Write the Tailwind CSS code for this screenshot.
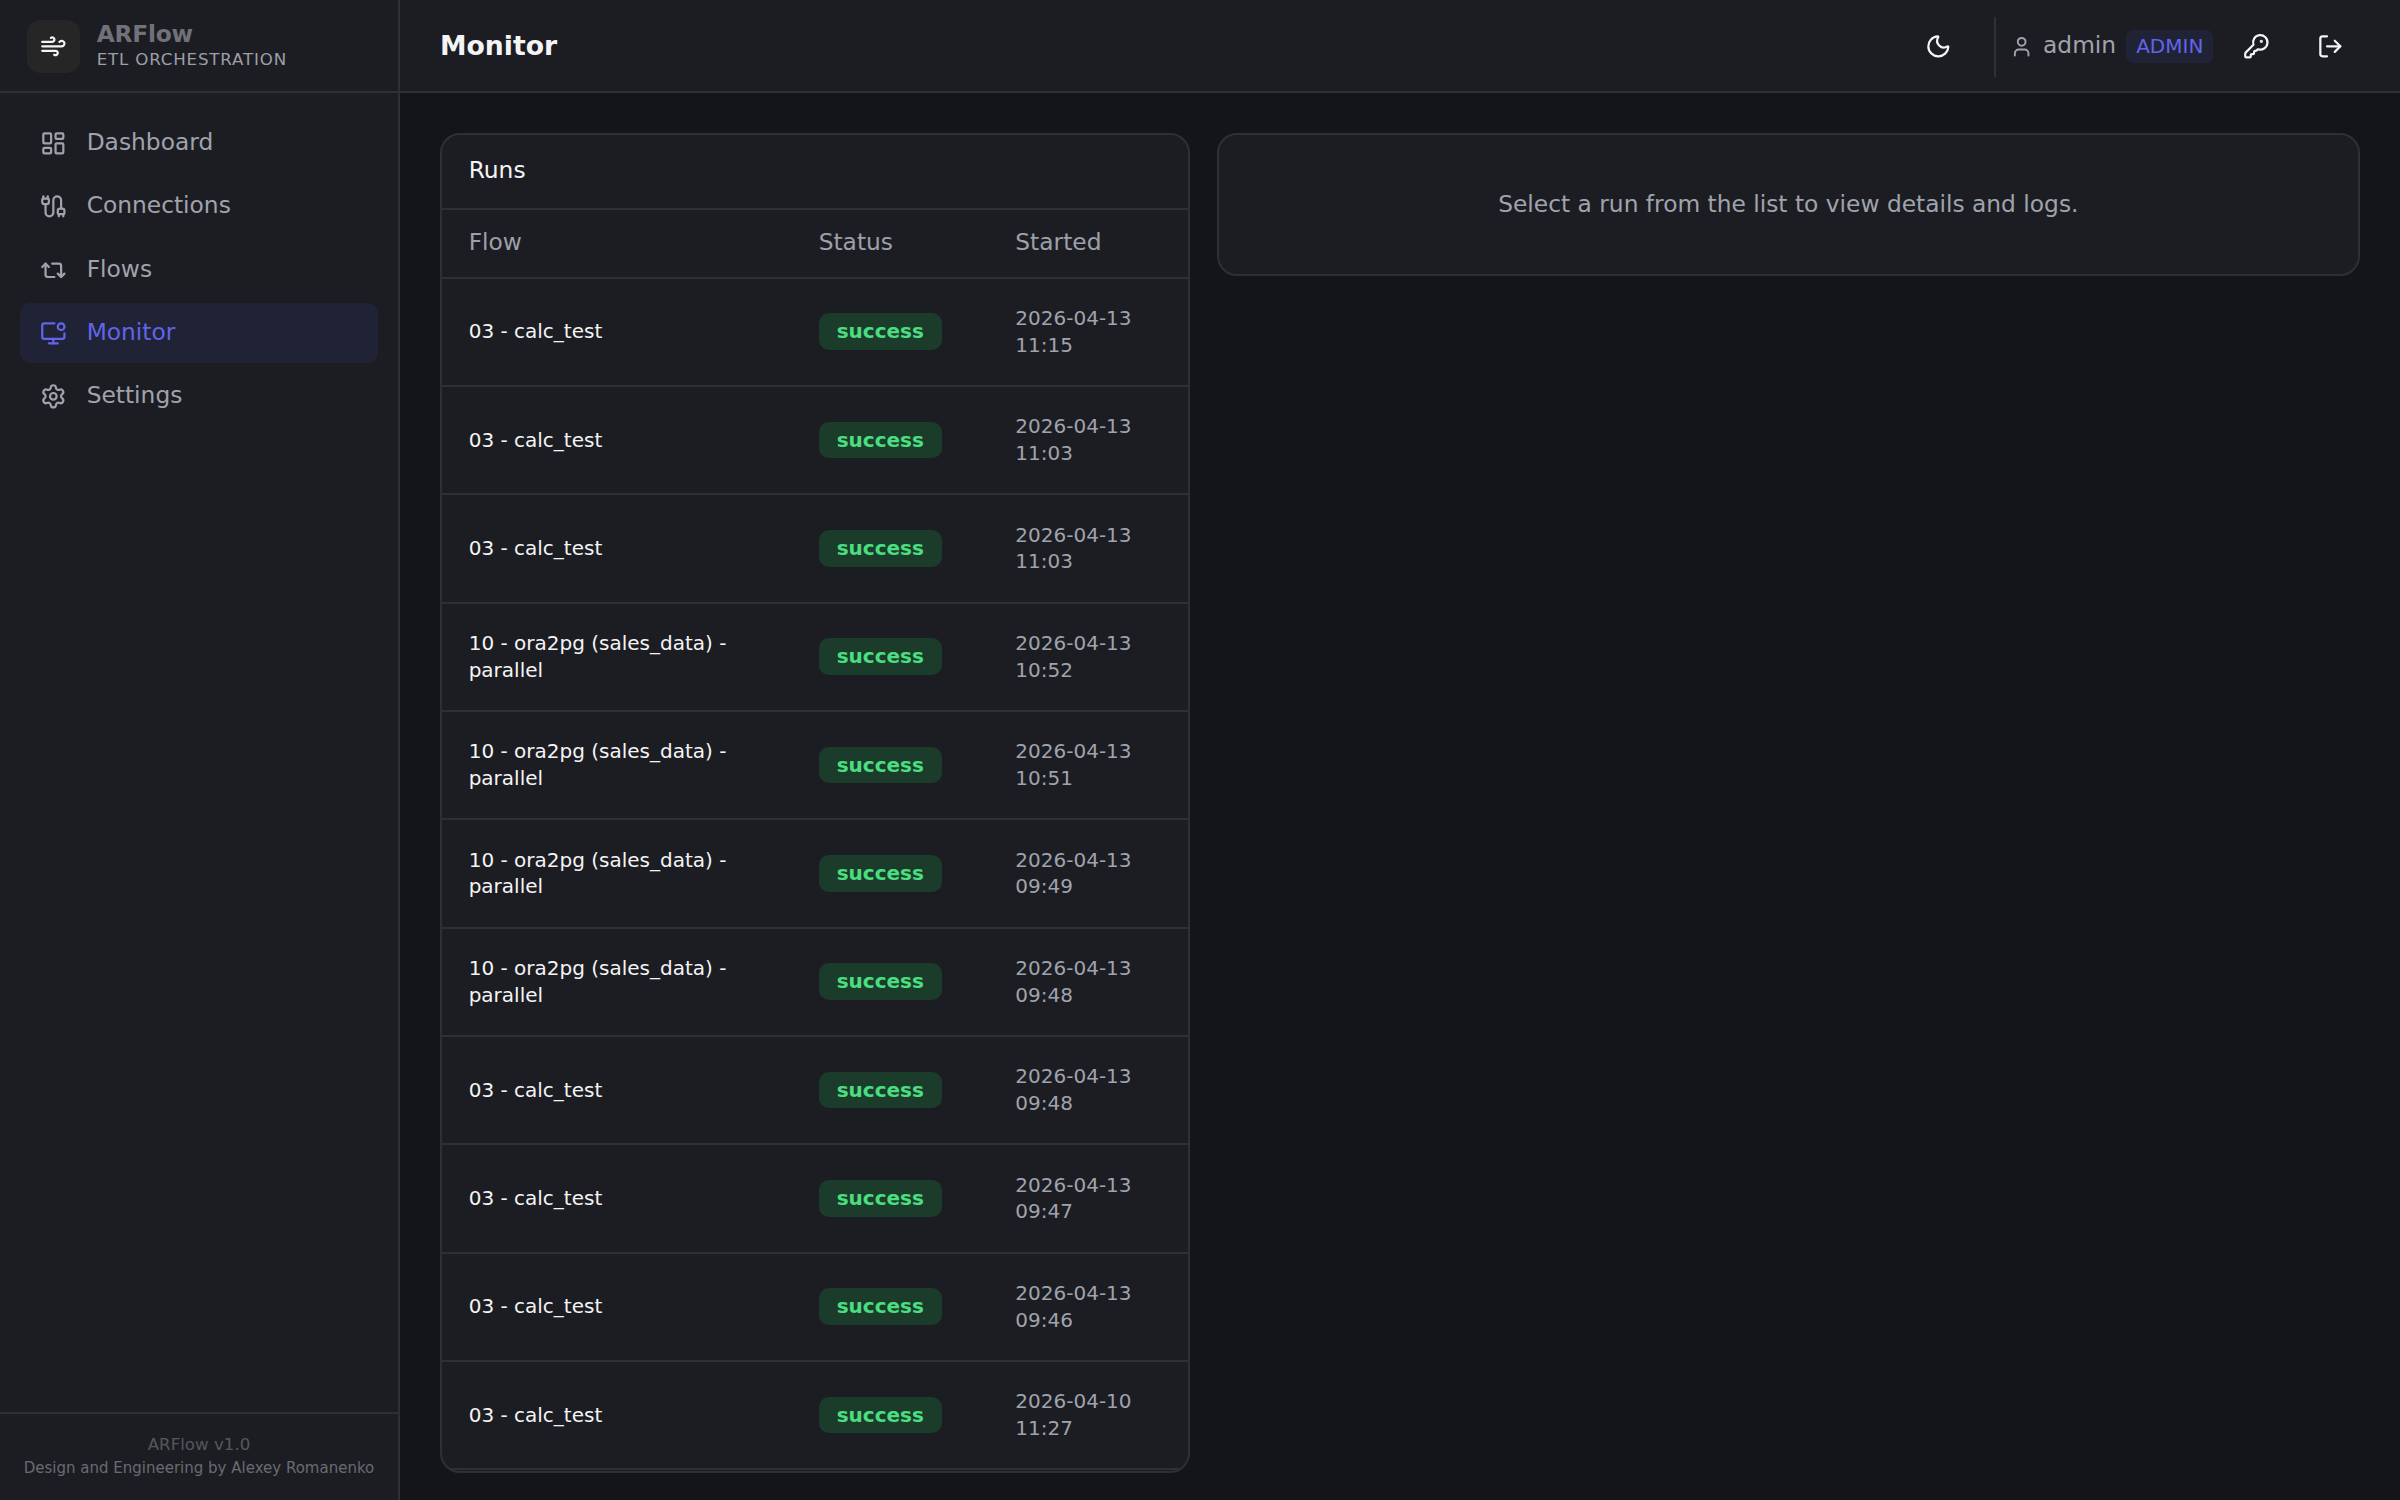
<!DOCTYPE html>
<html lang="en" class="text-[26.6667px]">
<head>
    <meta charset="UTF-8">
    <meta name="viewport" content="width=device-width, initial-scale=1.0">
    <title>ARFlow - Monitor</title>
    <script src="https://cdn.jsdelivr.net/npm/@tailwindcss/browser@4"></script>
</head>
<body class="flex h-screen overflow-hidden bg-[#141519] font-['DejaVu_Sans',sans-serif] text-sm text-[#f4f4f5]">

<aside class="flex w-60 shrink-0 flex-col border-r-2 border-[#2d3035] bg-[#1c1d22]">
    <div class="flex h-14 shrink-0 items-center gap-2.5 border-b-2 border-[#2d3035] px-4 pt-[2px]">
        <div class="flex size-8 items-center justify-center rounded-lg bg-[#262627]">
            <svg class="size-4" viewBox="0 0 24 24" fill="none" stroke="currentColor" stroke-width="2" stroke-linecap="round" stroke-linejoin="round">
                <path d="M12.8 19.6A2 2 0 1 0 14 16H2" />
                <path d="M17.5 8a2.5 2.5 0 1 1 2 4H2" />
                <path d="M9.8 4.4A2 2 0 1 1 11 8H2" />
            </svg>
        </div>
        <div class="pb-[2px]">
            <div class="text-sm/[1.05rem] font-bold tracking-[-0.01em] text-[#71717a]">ARFlow</div>
            <div class="text-[0.625rem]/[0.9rem] tracking-wider text-[#9c9fa8]">ETL ORCHESTRATION</div>
        </div>
    </div>

    <nav class="flex flex-1 flex-col gap-0.5 p-3 text-[#a0a3ac]">
        <a class="flex h-9 items-center gap-3 rounded-md px-3">
            <svg class="size-4" viewBox="0 0 24 24" fill="none" stroke="currentColor" stroke-width="2" stroke-linecap="round" stroke-linejoin="round">
                <rect width="7" height="9" x="3" y="3" rx="1" />
                <rect width="7" height="5" x="14" y="3" rx="1" />
                <rect width="7" height="9" x="14" y="12" rx="1" />
                <rect width="7" height="5" x="3" y="16" rx="1" />
            </svg>
            <span class="pb-[2px]">Dashboard</span>
        </a>
        <a class="flex h-9 items-center gap-3 rounded-md px-3">
            <svg class="size-4" viewBox="0 0 24 24" fill="none" stroke="currentColor" stroke-width="2" stroke-linecap="round" stroke-linejoin="round">
                <path d="M17 19a1 1 0 0 1-1-1v-2a2 2 0 0 1 2-2h2a2 2 0 0 1 2 2v2a1 1 0 0 1-1 1z" />
                <path d="M17 21v-2" />
                <path d="M19 14V6.5a1 1 0 0 0-7 0v11a1 1 0 0 1-7 0V10" />
                <path d="M21 21v-2" />
                <path d="M3 5V3" />
                <path d="M4 10a2 2 0 0 1-2-2V6a1 1 0 0 1 1-1h4a1 1 0 0 1 1 1v2a2 2 0 0 1-2 2z" />
                <path d="M7 5V3" />
            </svg>
            <span class="pb-[2px]">Connections</span>
        </a>
        <a class="flex h-9 items-center gap-3 rounded-md px-3">
            <svg class="size-4" viewBox="0 0 24 24" fill="none" stroke="currentColor" stroke-width="2" stroke-linecap="round" stroke-linejoin="round">
                <path d="m2 9 3-3 3 3" />
                <path d="M13 18H7a2 2 0 0 1-2-2V6" />
                <path d="m22 15-3 3-3-3" />
                <path d="M11 6h6a2 2 0 0 1 2 2v10" />
            </svg>
            <span class="pb-[1px]">Flows</span>
        </a>
        <a class="flex h-9 items-center gap-3 rounded-md bg-[#202336] px-3 text-[#6065ea]">
            <svg class="size-4" viewBox="0 0 24 24" fill="none" stroke="currentColor" stroke-width="2" stroke-linecap="round" stroke-linejoin="round">
                <circle cx="19" cy="6" r="3" />
                <path d="M22 12v3a2 2 0 0 1-2 2H4a2 2 0 0 1-2-2V5a2 2 0 0 1 2-2h9" />
                <path d="M12 17v4" />
                <path d="M8 21h8" />
            </svg>
            <span class="pb-[2px]">Monitor</span>
        </a>
        <a class="flex h-9 items-center gap-3 rounded-md px-3">
            <svg class="size-4" viewBox="0 0 24 24" fill="none" stroke="currentColor" stroke-width="2" stroke-linecap="round" stroke-linejoin="round">
                <path d="M9.671 4.136a2.34 2.34 0 0 1 4.659 0 2.34 2.34 0 0 0 3.319 1.915 2.34 2.34 0 0 1 2.33 4.033 2.34 2.34 0 0 0 0 3.831 2.34 2.34 0 0 1-2.33 4.033 2.34 2.34 0 0 0-3.319 1.915 2.34 2.34 0 0 1-4.659 0 2.34 2.34 0 0 0-3.32-1.915 2.34 2.34 0 0 1-2.33-4.033 2.34 2.34 0 0 0 0-3.831A2.34 2.34 0 0 1 6.35 6.051a2.34 2.34 0 0 0 3.319-1.915" />
                <circle cx="12" cy="12" r="3" />
            </svg>
            <span class="pb-[2px]">Settings</span>
        </a>
    </nav>

    <div class="h-[3.3125rem] shrink-0 border-t-2 border-[#2d3035] pt-[0.6875rem] text-center whitespace-nowrap">
        <div class="text-[0.625rem]/[0.9375rem] text-[#55575d]">ARFlow v1.0</div>
        <div class="text-[0.5625rem]/[0.875rem] text-[#686b72]">Design and Engineering by Alexey Romanenko</div>
    </div>
</aside>

<div class="flex min-w-0 flex-1 flex-col">
    <header class="flex h-14 shrink-0 items-center justify-between border-b-2 border-[#2d3035] bg-[#1c1d22] px-6">
        <h1 class="text-base font-bold">Monitor</h1>
        <div class="flex items-center pt-[2px]">
            <button class="mr-[calc(1rem-1px)] flex size-9 items-center justify-center">
                <svg class="size-4" viewBox="0 0 24 24" fill="none" stroke="currentColor" stroke-width="2" stroke-linecap="round" stroke-linejoin="round">
                    <path d="M20.985 12.486a9 9 0 1 1-9.473-9.472c.405-.022.617.46.402.803a6 6 0 0 0 8.268 8.268c.344-.215.825-.004.803.401" />
                </svg>
            </button>
            <div class="flex h-9 items-center gap-2 border-l-2 border-[#2d3035] pl-2">
                <div class="flex items-center gap-1.5 text-[#a0a3ac]">
                    <svg class="size-3.5" viewBox="0 0 24 24" fill="none" stroke="currentColor" stroke-width="2" stroke-linecap="round" stroke-linejoin="round">
                        <path d="M19 21v-2a4 4 0 0 0-4-4H9a4 4 0 0 0-4 4v2" />
                        <circle cx="12" cy="7" r="4" />
                    </svg>
                    <span class="pb-[2px]">admin</span>
                    <span class="rounded bg-[#202336] px-1.5 py-0.5 text-xs text-[#6065ea]">ADMIN</span>
                </div>
                <button class="flex size-9 items-center justify-center">
                    <svg class="size-4" viewBox="0 0 24 24" fill="none" stroke="currentColor" stroke-width="2" stroke-linecap="round" stroke-linejoin="round">
                        <path d="M2.586 17.414A2 2 0 0 0 2 18.828V21a1 1 0 0 0 1 1h3a1 1 0 0 0 1-1v-1a1 1 0 0 1 1-1h1a1 1 0 0 0 1-1v-1a1 1 0 0 1 1-1h.172a2 2 0 0 0 1.414-.586l.814-.814a6.5 6.5 0 1 0-4-4z" />
                        <circle cx="16.5" cy="7.5" r=".5" fill="currentColor" />
                    </svg>
                </button>
                <button class="flex size-9 items-center justify-center">
                    <svg class="size-4" viewBox="0 0 24 24" fill="none" stroke="currentColor" stroke-width="2" stroke-linecap="round" stroke-linejoin="round">
                        <path d="m16 17 5-5-5-5" />
                        <path d="M21 12H9" />
                        <path d="M9 21H5a2 2 0 0 1-2-2V5a2 2 0 0 1 2-2h4" />
                    </svg>
                </button>
            </div>
        </div>
    </header>

    <main class="flex flex-1 items-start gap-4 p-6">
        <section class="h-[50.25rem] w-[28.125rem] shrink-0 overflow-hidden rounded-xl border-2 border-[#2d3035] bg-[#1c1d22]">
            <div class="flex h-[2.8125rem] items-center border-b-2 border-[#2d3035] px-4 pb-[2px]">Runs</div>
            <div class="grid h-[2.5625rem] grid-cols-[13.125rem_7.375rem_1fr] items-center border-b-2 border-[#2d3035] pb-[2px] text-[#9da0a9]">
                <div class="px-4">Flow</div>
                <div class="px-4">Status</div>
                <div class="px-4">Started</div>
            </div>
            <div id="runs"></div>
        </section>

        <section class="flex-1 rounded-xl border-2 border-[#2d3035] bg-[#1c1d22] px-8 pt-[calc(2rem-1px)] pb-8 text-center text-[#a0a3ac]">
            Select a run from the list to view details and logs.
        </section>
    </main>
</div>

<script>
    const runs = [
        ['03 - calc_test', '2026-04-13 11:15'],
        ['03 - calc_test', '2026-04-13 11:03'],
        ['03 - calc_test', '2026-04-13 11:03'],
        ['10 - ora2pg (sales_data) - parallel', '2026-04-13 10:52'],
        ['10 - ora2pg (sales_data) - parallel', '2026-04-13 10:51'],
        ['10 - ora2pg (sales_data) - parallel', '2026-04-13 09:49'],
        ['10 - ora2pg (sales_data) - parallel', '2026-04-13 09:48'],
        ['03 - calc_test', '2026-04-13 09:48'],
        ['03 - calc_test', '2026-04-13 09:47'],
        ['03 - calc_test', '2026-04-13 09:46'],
        ['03 - calc_test', '2026-04-10 11:27'],
    ];

    document.getElementById('runs').innerHTML = runs.map(([flow, started]) => `
        <div class="grid h-[4.0625rem] grid-cols-[13.125rem_7.375rem_1fr] items-center border-b-2 border-[#2d3035] text-xs">
            <div class="px-4">${flow}</div>
            <div class="px-4">
                <span class="flex h-[1.375rem] w-[4.625rem] items-center justify-center rounded-md bg-[#1c3c2b] font-bold text-[#4ade80]">success</span>
            </div>
            <div class="px-4 text-[#a0a3ac]">${started}</div>
        </div>
    `).join('');
</script>
</body>
</html>
